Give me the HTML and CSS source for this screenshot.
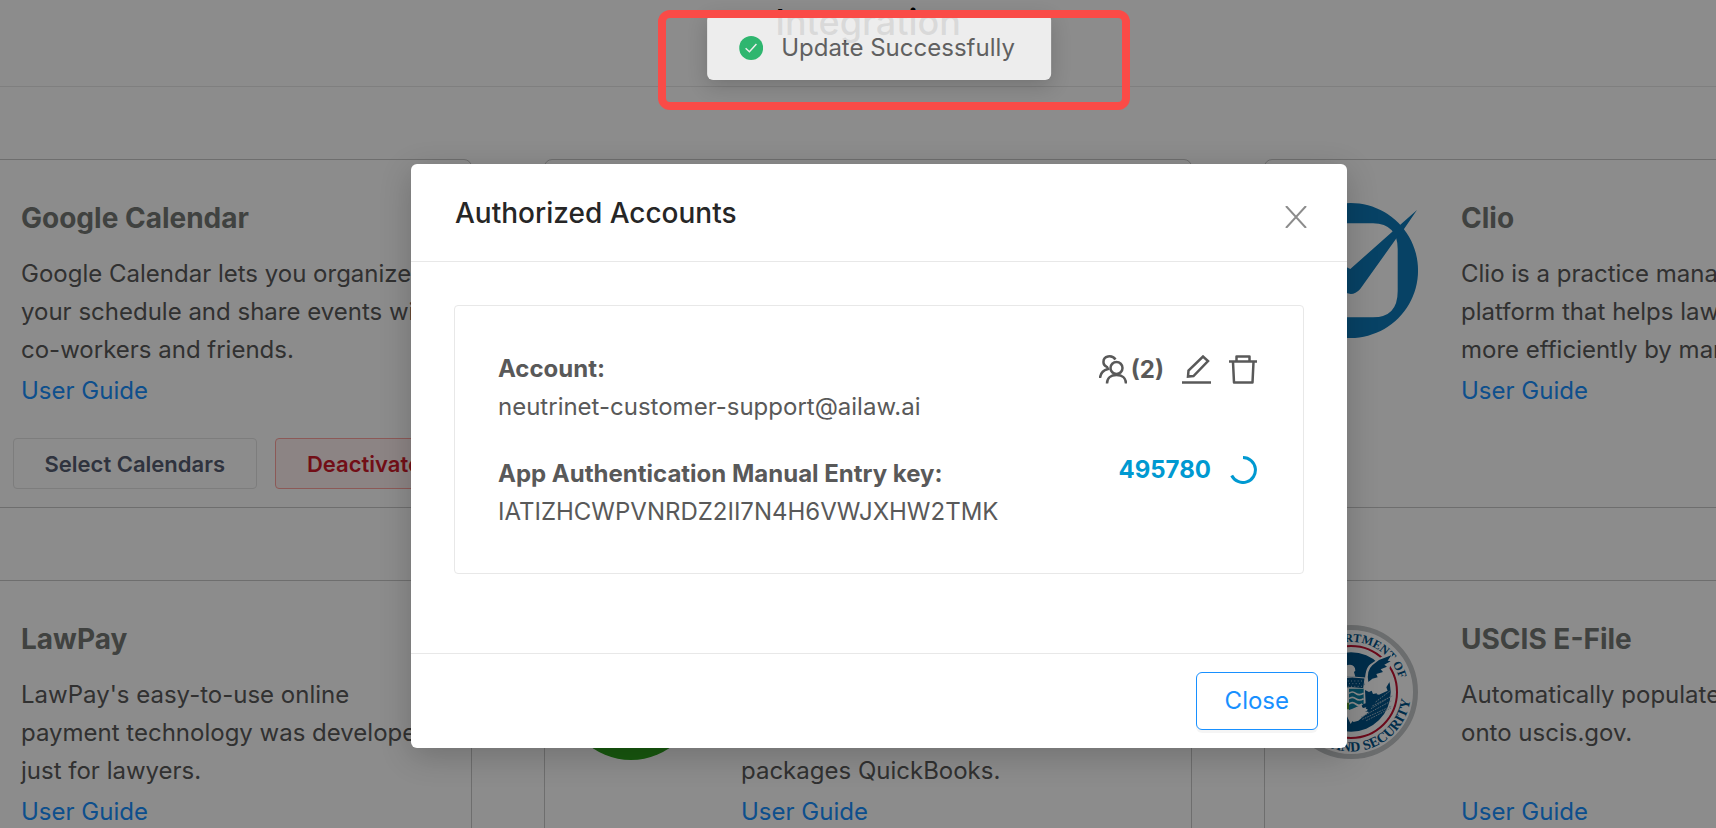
FILE: index.html
```html
<!DOCTYPE html>
<html lang="en">
<head>
    <meta charset="UTF-8">
    <meta name="viewport" content="width=device-width, initial-scale=1.0">
    <title>Integration</title>
    <link rel="stylesheet" href="styles.css">
</head>
<body>
    <div class="page">
        <header class="page-header">
            <h1>Integration</h1>
        </header>

        <main class="cards">
            <section class="card">
                <div class="card-main">
                    <div class="logo"></div>
                    <div class="info">
                        <h2>Google Calendar</h2>
                        <p>Google Calendar lets you organize<br>your schedule and share events with<br>co-workers and friends.</p>
                        <a href="#">User Guide</a>
                    </div>
                </div>
                <div class="card-actions">
                    <button class="btn">Select Calendars</button>
                    <button class="btn btn-danger">Deactivate</button>
                </div>
            </section>

            <section class="card"></section>

            <section class="card">
                <div class="card-main">
                    <svg class="logo" viewBox="0 0 136 136">
                        <path fill="#0d78b8" fill-rule="evenodd" d="M67.500 0a67.500 67.500 0 1 0 .1 0zM45 20.300H90Q114.700 21 114.700 46V88Q114.700 114.300 90 114.300H45Q20 114.300 20 88V46Q20 20.300 45 20.300z"/>
                        <path fill="#0d78b8" d="M134 7L121 26 112.700 36.300 77 86.300Q69 95 60 88L43 72Q40 66 45 61 50 57 55 60L67.300 66 108.700 29.300 117 22z"/>
                    </svg>
                    <div class="info">
                        <h2>Clio</h2>
                        <p>Clio is a practice management<br>platform that helps law firms run<br>more efficiently by managing</p>
                        <a href="#">User Guide</a>
                    </div>
                </div>
            </section>

            <section class="card">
                <div class="card-main">
                    <div class="logo"></div>
                    <div class="info">
                        <h2>LawPay</h2>
                        <p>LawPay's easy-to-use online<br>payment technology was developed<br>just for lawyers.</p>
                        <a href="#">User Guide</a>
                    </div>
                </div>
            </section>

            <section class="card">
                <div class="card-main">
                    <svg class="logo" viewBox="0 0 136 136">
                        <circle cx="68" cy="68" r="68" fill="#2ca01c"/>
                    </svg>
                    <div class="info">
                        <h2>&nbsp;</h2>
                        <p><br><br>packages QuickBooks.</p>
                        <a href="#">User Guide</a>
                    </div>
                </div>
            </section>

            <section class="card">
                <div class="card-main">
                    <svg class="logo" viewBox="0 0 136 136">
                        <defs>
                            <path id="arcTop" d="M18 68A50 50 0 0 1 116.300 55"/>
                            <path id="arcBottom" d="M8 68A60 60 0 0 0 127.400 76"/>
                        </defs>
                        <circle cx="68" cy="68" r="64.500" fill="#fff" stroke="#c4c6c8" stroke-width="5"/>
                        <circle cx="68" cy="68" r="46" fill="none" stroke="#c41230" stroke-width="2"/>
                        <circle cx="68" cy="68" r="39.700" fill="#005288"/>
                        <text class="seal-text" text-anchor="end"><textPath href="#arcTop" startOffset="100%">DEPARTMENT OF</textPath></text>
                        <text class="seal-text seal-text-bottom" text-anchor="end"><textPath href="#arcBottom" startOffset="100%">AND SECURITY</textPath></text>
                        <!-- eagle -->
                        <g transform="translate(-4 -24) scale(.3333)">
                            <path fill="#fff" d="M258 255Q256 205 275 192L305 172 340 160 334 196 326 224 335 240 322 262 326 272 300 284 290 282 280 300 270 330 232 345 215 372 195 330V262z"/>
                            <path fill="#005288" d="M268 246Q262 212 280 196L300 180 337 166 326 182 335 184 316 194 324 200 305 208 312 216 292 222 296 232 280 236z"/>
                            <path fill="#005288" d="M258 270l12 6 8-4 4 10 12-2-6 14 14-6 28-10-8 46-30 30-30-12 4-14-16-4-2-10 12-4z"/>
                            <path fill="#fff" d="M196 212q0-18 17-18 16 2 16 18l-4 4 4 14h-33z"/>
                            <path fill="#005288" stroke="#fff" stroke-width="3" d="M180 234q40-6 78 0l-4 32q-40-6-74 0z"/>
                            <path fill="none" stroke="#9fc3d8" stroke-width="3" stroke-dasharray="3 7" d="M186 243h66M190 251h60M186 259h66"/>
                            <path fill="#0b84a8" d="M210 266h44v44q-8 14-44 20z"/>
                            <path fill="none" stroke="#fff" stroke-width="5" d="M210 280q10-8 20 0t24 0M210 296q10-8 20 0t24 0M210 312q10-8 20 0t20 0"/>
                            <path fill="#5c9e31" d="M180 308h30v20h-30z"/>
                            <path fill="#fff" d="M212 330l32-14 8 8 10-2-4 12 12 2-18 14-14 12-14 4-12-8z"/>
                            <path fill="none" stroke="#9fb8c8" stroke-width="3" stroke-dasharray="5 3" d="M246 352l92-50M250 358l88-40M262 362l74-38M280 318l60-30M276 326l62-38M290 306l44-34"/>
                        </g>
                    </svg>
                    <div class="info">
                        <h2>USCIS E-File</h2>
                        <p>Automatically populate forms<br>onto uscis.gov.<br><br></p>
                        <a href="#">User Guide</a>
                    </div>
                </div>
            </section>
        </main>
    </div>

    <div class="overlay">
        <div class="modal" role="dialog" aria-labelledby="modalTitle">
            <div class="modal-header">
                <h2 id="modalTitle">Authorized Accounts</h2>
                <button class="icon-btn close" aria-label="Close dialog">
                    <svg width="22" height="22" viewBox="0 0 22 22" fill="none" stroke="#8c8c8c" stroke-width="2"><path d="M1 0l20 22M21 0L1 22"/></svg>
                </button>
            </div>
            <div class="modal-body">
                <div class="account">
                    <div class="row">
                        <div>
                            <strong>Account:</strong>
                            <p>neutrinet-customer-support@ailaw.ai</p>
                        </div>
                        <div class="tools">
                            <button class="icon-btn" aria-label="Users">
                                <svg width="28" height="29" viewBox="0 0 28 29" fill="none" stroke="#595959" stroke-width="2.500"><circle cx="17.500" cy="13" r="6"/><path d="M8 28.500C8 23 12 20 17.500 20S27 23 27 28.500M16.500 4.500C13-.5 4 .5 4.500 7.500c0 2 1.500 3.500 3.500 4.500L9 14c-4 1-7.500 4-8 9"/></svg>
                                <span>(2)</span>
                            </button>
                            <button class="icon-btn" aria-label="Edit">
                                <svg width="29" height="29" viewBox="0 0 29 29" fill="none" stroke="#595959" stroke-width="2.500"><path d="M0 27.500h29"/><path d="M6 21.500L6.500 15.500 21 1.500l5 4.500-14.500 15z"/></svg>
                            </button>
                            <button class="icon-btn" aria-label="Delete">
                                <svg width="28" height="29" viewBox="0 0 28 29" fill="none" stroke="#595959" stroke-width="2.500" stroke-linejoin="round"><path d="M0 6.500h28M4 7l1 20.500h18.500L24.500 7M7.500 6.500V1.500h13v5"/></svg>
                            </button>
                        </div>
                    </div>
                    <div class="row">
                        <div>
                            <strong>App Authentication Manual Entry key:</strong>
                            <p>IATIZHCWPVNRDZ2II7N4H6VWJXHW2TMK</p>
                        </div>
                        <div class="code">
                            <span>495780</span>
                            <svg width="28" height="28" viewBox="0 0 28 28" fill="none" stroke="#0099d1" stroke-width="3"><path d="M14 1.500A12.500 12.500 0 1 1 2.700 19.500"/></svg>
                        </div>
                    </div>
                </div>
            </div>
            <div class="modal-footer">
                <button class="btn-close">Close</button>
            </div>
        </div>
    </div>

    <div class="message" role="status">
        <svg width="24" height="24" viewBox="0 0 24 24"><circle cx="12" cy="12" r="12" fill="#1fbe6b"/><path d="M6.500 12.300l3.800 3.400 7-7.700" fill="none" stroke="#fff" stroke-width="1.500"/></svg>
        <span>Update Successfully</span>
    </div>
    <div class="highlight"></div>
</body>
</html>
```
FILE: styles.css
```css
* {
    margin: 0;
    padding: 0;
    box-sizing: border-box;
}
body {
    font-family: Inter, "Liberation Sans", sans-serif;
    font-size: 24px;
    line-height: 38px;
    color: #595959;
    background-color: #fff;
    position: relative;
    overflow: hidden;
    height: 100vh;
}
button {
    font-family: inherit;
    cursor: pointer;
}
a {
    color: #1890ff;
    text-decoration: none;
}
/* the page is a little wider than the window */
.page {
    width: calc(100% + 20px);
}
.page-header {
    height: 87px;
    border-bottom: 1px solid #e8e8e8;
    text-align: center;
}
.page-header h1 {
    font-size: 36px;
    font-weight: 500;
    line-height: 44px;
    color: #000;
}
.cards {
    display: grid;
    grid-template-columns: repeat(3, 648px);
    grid-auto-rows: 349px;
    justify-content: center;
    gap: 72px;
    padding-top: 72px;
}
.card {
    display: flex;
    flex-direction: column;
    justify-content: space-between;
    padding: 39px 18px 18px;
    border: 1px solid #c8c8c8;
    border-radius: 8px;
    overflow: hidden;
    white-space: nowrap;
}
.card-main {
    display: flex;
    gap: 42px;
}
.logo {
    flex: none;
    width: 136px;
    height: 136px;
    margin-top: 4px;
}
.seal-text {
    font-family: "Liberation Serif", serif;
    font-size: 12px;
    font-weight: 700;
    fill: #005288;
}
.seal-text-bottom {
    font-size: 14px;
}
.info h2 {
    font-size: 28px;
    font-weight: 700;
    margin-bottom: 18px;
    color: #757876;
}
.info a {
    display: block;
    margin-top: 3px;
}
.card-actions {
    display: flex;
    justify-content: flex-end;
    gap: 18px;
}
.btn {
    height: 51px;
    padding: 0 31px;
    font-size: 22px;
    font-weight: 600;
    color: #565d72;
    background-color: #fff;
    border: 1px solid #e4e4e4;
    border-radius: 4px;
}
.btn-danger {
    color: #cf1b2b;
    background-color: #fff1f0;
    border-color: #ffa39e;
}
.overlay {
    position: absolute;
    top: 0;
    left: 0;
    width: 100%;
    height: 100%;
    padding: 164px 0 0 42px;
    background-color: rgba(0, 0, 0, 0.45);
}
.modal {
    width: 936px;
    max-width: 100%;
    margin: 0 auto;
    background-color: #fff;
    border-radius: 6px;
    box-shadow: 0 8px 32px rgba(0, 0, 0, 0.2);
}
.modal-header {
    display: flex;
    justify-content: space-between;
    align-items: center;
    height: 98px;
    padding: 0 40px 0 44px;
    border-bottom: 1px solid #e8e8e8;
}
.modal-header h2 {
    font-size: 28px;
    font-weight: 500;
    color: #262626;
}
.icon-btn {
    display: flex;
    align-items: center;
    gap: 4px;
    background: none;
    border: none;
    color: #595959;
    font-size: 24px;
    font-weight: 700;
}
.close {
    padding-top: 8px;
}
.modal-body {
    padding: 43px 43px 79px;
}
.account {
    display: flex;
    flex-direction: column;
    gap: 29px;
    padding: 44px 46px 42px 43px;
    border: 1px solid #e8e8e8;
    border-radius: 4px;
}
.account strong {
    font-weight: 700;
}
.row {
    display: flex;
    justify-content: space-between;
    align-items: flex-start;
}
.tools {
    display: flex;
    gap: 18px;
    padding-top: 5px;
}
.code {
    display: flex;
    align-items: center;
    gap: 18px;
    line-height: 30px;
    font-weight: 700;
    color: #0099d1;
}
.modal-footer {
    display: flex;
    justify-content: flex-end;
    padding: 18px 29px;
    border-top: 1px solid #e8e8e8;
}
.btn-close {
    padding: 9px 28px;
    font-size: 24px;
    line-height: 38px;
    color: #1890ff;
    background-color: #fff;
    border: 1px solid #1890ff;
    border-radius: 6px;
    box-shadow: 0 3px 0 rgba(0, 0, 0, 0.04);
}
.message {
    position: absolute;
    top: 14px;
    left: calc(50% + 21px);
    transform: translateX(-50%);
    display: flex;
    align-items: center;
    gap: 18px;
    padding: 15px 36px 13px 32px;
    background-color: #fff;
    border-radius: 6px;
    box-shadow: 0 6px 20px rgba(0, 0, 0, 0.2);
    opacity: 0.85;
    white-space: nowrap;
}
.highlight {
    position: absolute;
    top: 10px;
    left: calc(50% - 200px);
    width: 472px;
    height: 100px;
    border: 8px solid #fa4b47;
    border-radius: 12px;
}
```
